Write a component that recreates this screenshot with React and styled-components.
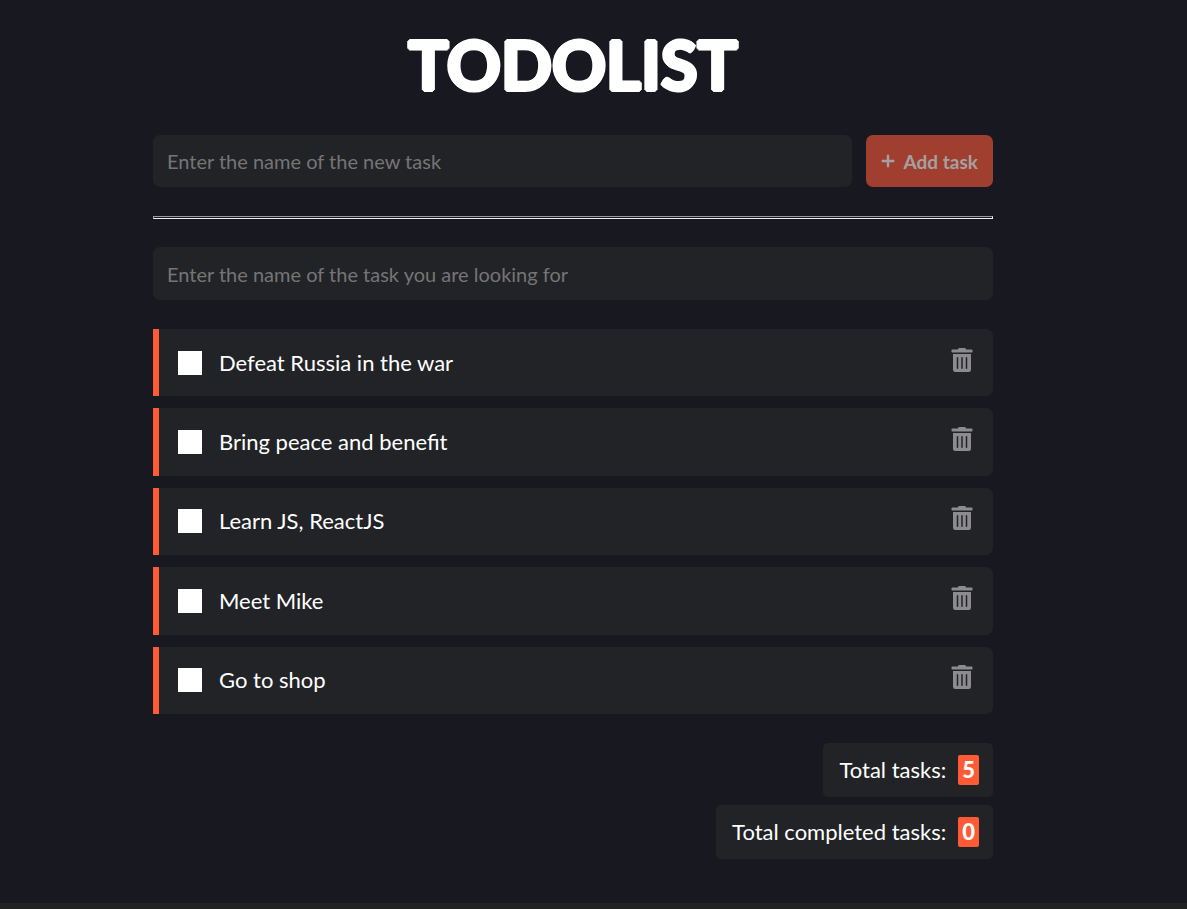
import React, { useState } from "react";
import styled, { createGlobalStyle } from "styled-components";
import { FaTrashAlt } from "react-icons/fa";

const Global = createGlobalStyle`
  * { box-sizing: border-box; }
  html { background: #222222; }
  body { margin: 0; font-family: Lato, sans-serif; color: #fff; }
  button, input { font: inherit; }
`;

const Page = styled.div`
  background: #181820;
  padding: 28px 56px 44px 15px;
`;

const Container = styled.main`
  max-width: 840px;
  margin: 0 auto;
`;

const Title = styled.h1`
  margin: 0 0 35px;
  text-align: center;
  font-size: 67px;
  line-height: 72px;
  font-weight: 700;
  text-shadow:
    2px 0 #fff, -2px 0 #fff, 0 2px #fff, 0 -2px #fff,
    1px 1px #fff, -1px 1px #fff, 1px -1px #fff, -1px -1px #fff;
`;

const AddForm = styled.form`
  display: flex;
  gap: 14px;
`;

const Field = styled.input`
  display: block;
  flex: 1;
  width: 100%;
  min-width: 0;
  height: ${(p) => (p.type === "search" ? "53px" : "52px")};
  padding: 0 14px;
  border: 0;
  border-radius: 7px;
  outline: 0;
  appearance: none;
  background: #222327;
  color: #fff;
  font-size: 20px;
  &::placeholder { color: #757575; opacity: 1; }
`;

const AddButton = styled.button`
  display: flex;
  align-items: center;
  justify-content: space-between;
  width: 127px;
  padding: 0 15px;
  border: 0;
  border-radius: 7px;
  background: #a03e2f;
  color: #a5a0a2;
  font-size: 19px;
  font-weight: 700;
`;

const Divider = styled.hr`
  height: 3px;
  margin: 29px 0 28px;
  border: 1px solid;
  border-color: #9a9a9a #eeeeee #eeeeee #9a9a9a;
`;

const TaskList = styled.ul`
  display: grid;
  grid-auto-rows: 1fr;
  gap: 12px;
  min-height: 385px;
  margin: 29px 0;
  padding: 0;
  list-style: none;
`;

const TaskRow = styled.li`
  display: flex;
  align-items: center;
  padding: 0 19px;
  border-left: 6px solid #ff5a36;
  border-radius: 0 7px 7px 0;
  background: #222327;
`;

const TaskLabel = styled.label`
  display: flex;
  flex: 1;
  align-items: center;
  gap: 17px;
  font-size: 22px;
  line-height: 30px;
`;

const Check = styled.input`
  appearance: none;
  width: 24px;
  height: 24px;
  margin: 0;
  background: #fff;
  &:checked { background: #ff5a36; }
`;

const DeleteButton = styled.button`
  display: flex;
  padding: 0 0 6px;
  border: 0;
  background: none;
  color: #8c8c8e;
  cursor: pointer;
`;

const Totals = styled.section`
  display: flex;
  flex-direction: column;
  align-items: flex-end;
  gap: 8px;
`;

const Total = styled.p`
  display: flex;
  align-items: center;
  gap: 12px;
  margin: 0;
  padding: 12px 14px 12px 16px;
  border-radius: 5px;
  background: #222327;
  font-size: 22px;
  line-height: 30px;
`;

const Count = styled.strong`
  padding: 0 4px;
  border-radius: 2px;
  background: #ff5a36;
  font-weight: 900;
`;

const PlusIcon = () => (
  <svg width="14" height="14" viewBox="0 0 14 14" aria-hidden="true">
    <path d="M7 .7v12.600M.7 7h12.600" stroke="currentColor" strokeWidth="2.4" />
  </svg>
);

const initialTasks = [
  "Defeat Russia in the war",
  "Bring peace and benefit",
  "Learn JS, ReactJS",
  "Meet Mike",
  "Go to shop",
].map((name, id) => ({ id, name, done: false }));

export default function App() {
  const [tasks, setTasks] = useState(initialTasks);
  const [name, setName] = useState("");
  const [query, setQuery] = useState("");

  const add = (e) => {
    e.preventDefault();
    if (!name.trim()) return;
    setTasks([...tasks, { id: Date.now(), name, done: false }]);
    setName("");
  };
  const toggle = (id) =>
    setTasks(tasks.map((t) => (t.id === id ? { ...t, done: !t.done } : t)));

  return (
    <Page>
      <Global />
      <Container>
        <Title>TODOLIST</Title>
        <AddForm onSubmit={add}>
          <Field type="text" aria-label="New task" placeholder="Enter the name of the new task"
            value={name} onChange={(e) => setName(e.target.value)} />
          <AddButton type="submit" disabled={!name.trim()}><PlusIcon />Add task</AddButton>
        </AddForm>
        <Divider />
        <Field type="search" aria-label="Find task" placeholder="Enter the name of the task you are looking for"
          value={query} onChange={(e) => setQuery(e.target.value)} />
        <TaskList>
          {tasks.filter((t) => t.name.toLowerCase().includes(query.toLowerCase())).map((t) => (
            <TaskRow key={t.id}>
              <TaskLabel>
                <Check type="checkbox" checked={t.done} onChange={() => toggle(t.id)} />
                {t.name}
              </TaskLabel>
              <DeleteButton type="button" aria-label={`Delete ${t.name}`}
                onClick={() => setTasks(tasks.filter((x) => x.id !== t.id))}>
                <FaTrashAlt size={24} />
              </DeleteButton>
            </TaskRow>
          ))}
        </TaskList>
        <Totals>
          <Total>Total tasks: <Count>{tasks.length}</Count></Total>
          <Total>Total completed tasks: <Count>{tasks.filter((t) => t.done).length}</Count></Total>
        </Totals>
      </Container>
    </Page>
  );
}
